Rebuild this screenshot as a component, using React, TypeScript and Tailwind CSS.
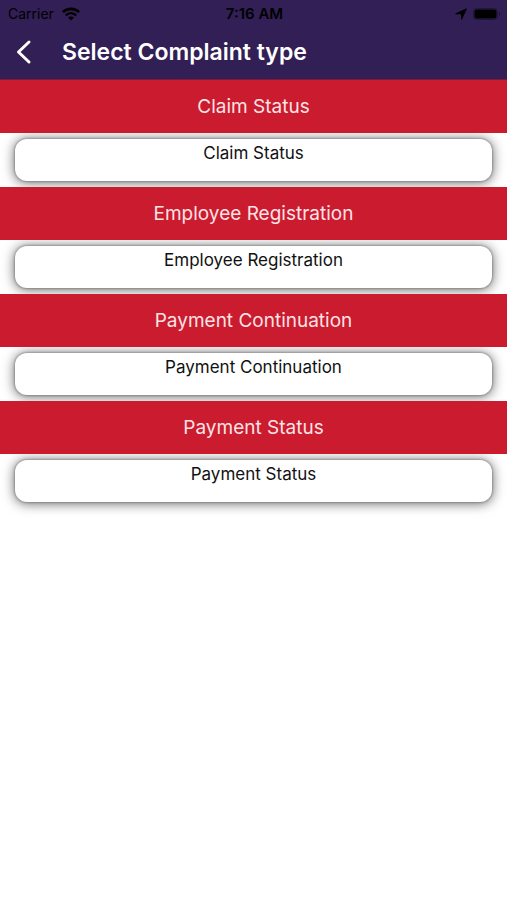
const complaintTypes = [
  { id: 1, section: 'Claim Status', items: ['Claim Status'] },
  { id: 2, section: 'Employee Registration', items: ['Employee Registration'] },
  { id: 3, section: 'Payment Continuation', items: ['Payment Continuation'] },
  { id: 4, section: 'Payment Status', items: ['Payment Status'] },
];

const WifiIcon = () => (
  <svg width="18" height="14" viewBox="0 0 18 14" fill="none" stroke="currentColor" aria-hidden="true">
    <path d="M0.9 5.2C5.4 0.7 12.6 0.7 17.1 5.2" strokeWidth="2.6" />
    <path d="M3.8 8.3C6.8 5.4 11.2 5.4 14.2 8.3" strokeWidth="2.4" />
    <path d="M9 13.6L6 10.6C7.7 9 10.3 9 12 10.6Z" fill="currentColor" stroke="none" />
  </svg>
);

const LocationIcon = () => (
  <svg width="12" height="12" viewBox="0 0 12 12" fill="currentColor" aria-hidden="true">
    <path d="M11.2 0.5C11.7 0.3 12 0.7 11.8 1.2L7 11.2C6.7 11.8 6 11.7 6 11V6.3H0.9C0.3 6.3 0.2 5.6 0.8 5.3Z" />
  </svg>
);

const BatteryIcon = () => (
  <svg width="28" height="12" viewBox="0 0 28 12" aria-hidden="true">
    <rect x="0.5" y="0.5" width="24" height="11" rx="3" fill="none" stroke="#000" strokeOpacity="0.3" />
    <rect x="1.5" y="1.5" width="22" height="9" rx="2" fill="#000" />
    <path d="M26 4C27.7 4.6 27.7 7.4 26 8Z" fill="#000" fillOpacity="0.4" />
  </svg>
);

const StatusBar = () => (
  <div className="grid h-7 grid-cols-3 items-center pl-2 pr-1.5 text-black">
    <div className="flex items-center gap-2 text-[14px] leading-5">
      <span>Carrier</span>
      <WifiIcon />
    </div>
    <span className="text-center text-[15px] font-semibold leading-5">7:16 AM</span>
    <div className="flex items-center justify-end gap-1.5">
      <LocationIcon />
      <BatteryIcon />
    </div>
  </div>
);

const App = () => {
  return (
    <div className="min-h-screen bg-white font-['Inter',sans-serif]">
      <header className="border-b border-[#7a1b42] bg-[#311f55]">
        <StatusBar />
        <div className="flex h-[51px] items-center gap-7 pb-1 pl-4">
          <button type="button" aria-label="Back" className="text-white">
            <svg width="18" height="26" viewBox="0 0 18 26" fill="none" stroke="currentColor" strokeWidth="3" strokeLinecap="round" strokeLinejoin="round" aria-hidden="true">
              <path d="M13 3L2.5 13L13 23" />
            </svg>
          </button>
          <h1 className="text-[23px] font-semibold leading-8 text-white">Select Complaint type</h1>
        </div>
      </header>

      <main>
        {complaintTypes.map(group => (
          <section key={group.id}>
            <h2 className="relative z-10 bg-[#cb1b2f] py-3 text-center text-[19px] leading-[29px] text-[#fbe3e5]">
              {group.section}
            </h2>
            {group.items.map(item => (
              <div key={item} className="px-[15px] py-1.5">
                <button
                  type="button"
                  className="flex h-[42px] w-full items-start justify-center rounded-xl bg-white pt-0.5 text-[17px] leading-6 text-[#111111] shadow-[0_0_2px_1px_rgba(0,0,0,0.2),0_1px_12px_1px_rgba(0,0,0,0.55)]"
                >
                  {item}
                </button>
              </div>
            ))}
          </section>
        ))}
      </main>
    </div>
  );
};

export default App;
